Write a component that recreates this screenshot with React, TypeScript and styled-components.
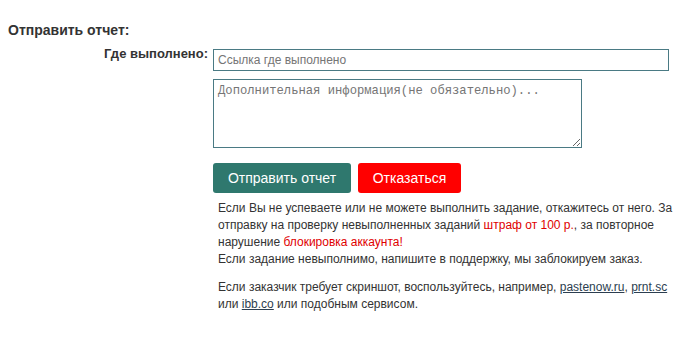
import React from "react"
import styled, { createGlobalStyle } from "styled-components"

const Global = createGlobalStyle`
  body {
    margin: 0;
    background: #fff;
    font-family: "Liberation Sans", Arial, sans-serif;
    color: #333;
  }
`

const Page = styled.div`
  padding: 22px 8px;
  font-size: 13px;
`

const Title = styled.div`
  font-weight: bold;
  font-size: 14px;
  line-height: 16px;
  color: #333;
  margin-bottom: 8px;
`

const Row = styled.div`
  display: flex;
  align-items: flex-start;
`

const Label = styled.label`
  width: 200px;
  text-align: right;
  font-weight: bold;
  font-size: 13px;
  line-height: 16px;
  flex-shrink: 0;
`

const Fields = styled.div`
  display: flex;
  flex-direction: column;
  padding: 3px 0 0 5px;
`

const TextInput = styled.input`
  width: 456px;
  height: 22px;
  box-sizing: border-box;
  border: 1px solid #4a7a84;
  padding: 0 4px;
  font-family: "Liberation Sans", Arial, sans-serif;
  font-size: 12px;
  color: #333;
  outline: none;
  &::placeholder { color: #757575; }
`

const Area = styled.textarea`
  margin-top: 8px;
  width: 369px;
  height: 69px;
  box-sizing: border-box;
  border: 1px solid #4a7a84;
  padding: 4px 4px;
  font-family: "Liberation Mono", "Courier New", monospace;
  font-size: 12.2px;
  color: #333;
  outline: none;
  &::placeholder { color: #757575; }
`

const Buttons = styled.div`
  display: flex;
  gap: 7px;
  margin-top: 15px;
`

const Btn = styled.button<{ $kind: "ok" | "no" }>`
  height: 30px;
  padding: 0;
  border: none;
  border-radius: 3px;
  background: ${(p) => (p.$kind === "ok" ? "#2f786e" : "#ff0000")};
  color: #fff;
  font-family: "Liberation Sans", Arial, sans-serif;
  font-size: 14px;
  white-space: nowrap;
  cursor: pointer;
  width: ${(p) => (p.$kind === "ok" ? "138px" : "103px")};
`

const Note = styled.div`
  margin-top: 7px;
  padding-left: 5px;
  width: 462px;
  line-height: 17px;
  font-size: 12px;
  color: #333;
`

const Para = styled.p`
  margin: 0 0 11px;
`

const Warn = styled.span`
  color: #e00000;
`

const Link = styled.a`
  color: #2c3e50;
  text-decoration: underline;
`

export default function App() {
  return (
    <>
      <Global />
      <Page>
        <Title>Отправить отчет:</Title>
        <Row>
          <Label>Где выполнено:</Label>
          <Fields>
            <TextInput placeholder="Ссылка где выполнено" />
            <Area placeholder="Дополнительная информация(не обязательно)..." />
            <Buttons>
              <Btn $kind="ok">Отправить отчет</Btn>
              <Btn $kind="no">Отказаться</Btn>
            </Buttons>
            <Note>
              <Para>
                Если Вы не успеваете или не можете выполнить задание, откажитесь от него. За
                отправку на проверку невыполненных заданий <Warn>штраф от 100 р.</Warn>, за повторное
                нарушение <Warn>блокировка аккаунта!</Warn>
                <br />
                Если задание невыполнимо, напишите в поддержку, мы заблокируем заказ.
              </Para>
              <Para>
                Если заказчик требует скриншот, воспользуйтесь, например, <Link href="#">pastenow.ru</Link>,{" "}
                <Link href="#">prnt.sc</Link> или <Link href="#">ibb.co</Link> или подобным сервисом.
              </Para>
            </Note>
          </Fields>
        </Row>
      </Page>
    </>
  )
}
